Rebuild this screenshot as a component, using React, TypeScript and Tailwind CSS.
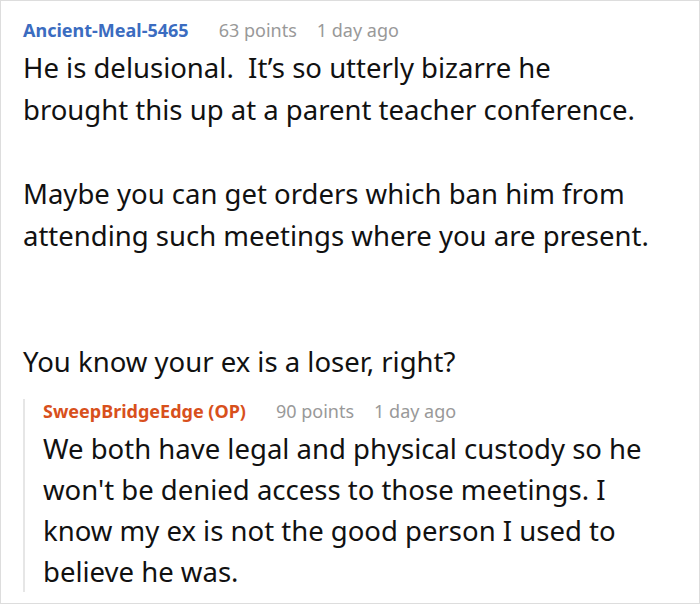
import React from 'react';

const parentText = `He is delusional.  It’s so utterly bizarre he brought this up at a parent teacher conference.

Maybe you can get orders which ban him from attending such meetings where you are present.


You know your ex is a loser, right?`;

const replyText = `We both have legal and physical custody so he won't be denied access to those meetings. I know my ex is not the good person I used to believe he was.`;

function Meta({ author, color, points }: { author: string; color: string; points: string }) {
  return (
    <div className="flex items-baseline text-[18px] leading-[24px]">
      <span className={`font-bold ${color}`}>{author}</span>
      <span className="ml-[30px] text-[#999999]">{points}</span>
      <span className="ml-[20px] text-[#999999]">1 day ago</span>
    </div>
  );
}

export default function App() {
  return (
    <div className="w-[700px] h-[604px] bg-white border border-[#dddddd] overflow-hidden font-['Noto_Sans',sans-serif] text-[#111111]">
      <div className="pl-[22px] pr-[40px] pt-[17px]">
        <Meta author="Ancient-Meal-5465" color="text-[#3b6cc0]" points="63 points" />
        <p className="whitespace-pre-wrap text-[27.5px] leading-[42px] mt-[5px]">{parentText}</p>
        <div className="mt-[16px] border-l-2 border-[#e6e6e6] pl-[18px]">
          <Meta author="SweepBridgeEdge (OP)" color="text-[#d8501c]" points="90 points" />
          <p className="text-[27.5px] leading-[41px] mt-[5px]">{replyText}</p>
        </div>
      </div>
    </div>
  );
}
